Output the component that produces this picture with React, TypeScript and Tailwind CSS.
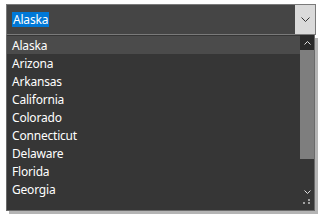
import React from "react";

const states = [
  "Alaska",
  "Arizona",
  "Arkansas",
  "California",
  "Colorado",
  "Connecticut",
  "Delaware",
  "Florida",
  "Georgia",
];

export default function App() {
  return (
    <div
      className="w-[325px] h-[219px] bg-white pl-[6px] pt-[4px]"
      style={{ fontFamily: '"Noto Sans", "Open Sans", sans-serif' }}
    >
      <div className="w-[310px] flex flex-col">
        {/* Combo box */}
        <div className="h-[31px] border border-[#7a7a7a] bg-[#454545] flex items-stretch">
          <div className="flex-1 flex items-center pl-[5px]">
            <span className="bg-[#0078d7] text-white text-[12px] tracking-[-0.2px] leading-[15px] px-[1px]">
              Alaska
            </span>
          </div>
          <div className="w-[20px] bg-[#dadada] flex items-center justify-center">
            <svg width="9" height="6" viewBox="0 0 9 6">
              <path d="M0.5 0.5 L4.5 4.5 L8.5 0.5" fill="none" stroke="#333" strokeWidth="1" />
            </svg>
          </div>
        </div>
        {/* Dropdown list */}
        <div className="w-[309px] h-[176px] bg-[#363636] border border-t-0 border-[#6a6a6a] shadow-[3px_3px_0_#b4b4b4] flex overflow-hidden">
          <div className="flex-1 flex flex-col pt-[1px]">
            {states.map((s, i) => (
              <div
                key={s}
                className={`h-[18px] shrink-0 flex items-center pl-[5px] text-white text-[12px] tracking-[-0.2px] ${
                  i === 0 ? "bg-[#4b4b4b] pt-[1px]" : "pt-[2px]"
                }`}
              >
                {s}
              </div>
            ))}
          </div>
          <div className="w-[14px] flex flex-col bg-[#363636]">
            <div className="h-[15px] bg-[#2a2a2a] flex items-center justify-center">
              <svg width="7" height="4" viewBox="0 0 7 4">
                <path d="M0.5 3.5 L3.5 0.5 L6.5 3.5" fill="none" stroke="#e0e0e0" strokeWidth="1" />
              </svg>
            </div>
            <div className="h-[109px] bg-[#7e7e7e]" />
            <div className="flex-1 relative flex flex-col items-center">
              <div className="mt-[31px] ml-[1px]">
                <svg width="7" height="4" viewBox="0 0 7 4">
                  <path d="M0.5 0.5 L3.5 3.5 L6.5 0.5" fill="none" stroke="#e0e0e0" strokeWidth="1" />
                </svg>
              </div>
              <div className="absolute left-[3px] top-[43px] w-[2px] h-[2px] bg-[#a0a0a0]" />
              <div className="absolute left-[8px] top-[43px] w-[2px] h-[2px] bg-[#a0a0a0]" />
              <div className="absolute left-[8px] top-[40px] w-[2px] h-[2px] bg-[#a0a0a0]" />
            </div>
          </div>
        </div>
      </div>
    </div>
  );
}
